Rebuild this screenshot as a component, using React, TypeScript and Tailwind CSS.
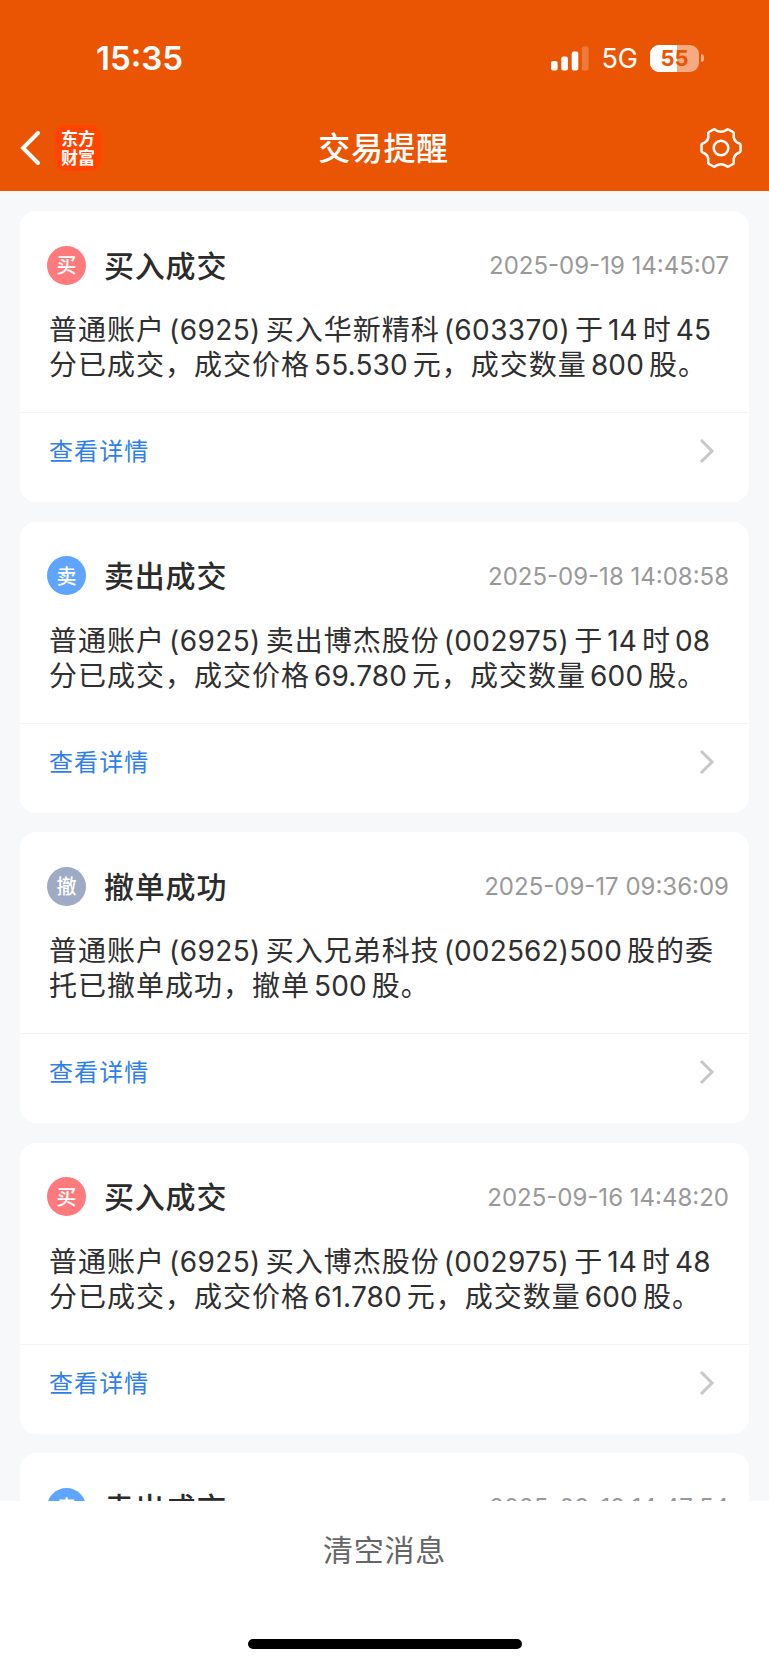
import { Fragment } from "react";

type Kind = "buy" | "sell" | "cancel";

interface Notice {
  kind: Kind;
  title: string;
  time: string;
  lines: string[];
}

const BADGE: Record<Kind, { label: string; className: string }> = {
  buy: { label: "买", className: "bg-[#ff7a7c]" },
  sell: { label: "卖", className: "bg-[#5fa5ff]" },
  cancel: { label: "撤", className: "bg-[#9fabc4]" },
};

const NOTICES: Notice[] = [
  {
    kind: "buy",
    title: "买入成交",
    time: "2025-09-19 14:45:07",
    lines: [
      "普通账户(6925)买入华新精科(603370)于14时45",
      "分已成交，成交价格55.530元，成交数量800股。",
    ],
  },
  {
    kind: "sell",
    title: "卖出成交",
    time: "2025-09-18 14:08:58",
    lines: [
      "普通账户(6925)卖出博杰股份(002975)于14时08",
      "分已成交，成交价格69.780元，成交数量600股。",
    ],
  },
  {
    kind: "cancel",
    title: "撤单成功",
    time: "2025-09-17 09:36:09",
    lines: [
      "普通账户(6925)买入兄弟科技(002562)500股的委",
      "托已撤单成功，撤单500股。",
    ],
  },
  {
    kind: "buy",
    title: "买入成交",
    time: "2025-09-16 14:48:20",
    lines: [
      "普通账户(6925)买入博杰股份(002975)于14时48",
      "分已成交，成交价格61.780元，成交数量600股。",
    ],
  },
  {
    kind: "sell",
    title: "卖出成交",
    time: "2025-09-12 14:47:54",
    lines: [],
  },
];

/** Sets digits and brackets in the Latin face with a little air on both sides. */
function MixedText({ text }: { text: string }) {
  const parts = text.split(/([0-9.()]+)/);
  return (
    <>
      {parts.map((part, i) =>
        i % 2 ? (
          <span
            key={i}
            className={`ml-1 font-['Inter'] leading-none ${
              part.endsWith(")") ? "mr-[5px] tracking-[0.4px]" : "mr-[5px] tracking-[0.15px]"
            }`}
          >
            {part}
          </span>
        ) : (
          <Fragment key={i}>{part}</Fragment>
        )
      )}
    </>
  );
}

function StatusBar() {
  return (
    <div className="flex h-[100px] items-end justify-between pr-[65px] pb-[24px] pl-[96px] font-['Inter'] text-white">
      <span className="text-[33px] leading-9 font-semibold">15:35</span>
      <div className="flex h-9 items-center">
        <svg width="38" height="25" viewBox="0 0 38 25" fill="#fff">
          <rect x="0" y="15" width="6.6" height="9.5" rx="2" />
          <rect x="10.3" y="10.5" width="6.6" height="14" rx="2" />
          <rect x="20.7" y="5.5" width="6.6" height="19" rx="2" />
          <rect x="31" y="0.5" width="6.6" height="24" rx="2" opacity="0.22" />
        </svg>
        <span className="mt-0.5 ml-3 text-[27px] leading-9">5G</span>
        <div className="relative ml-3 flex h-[27px] w-[49px] items-center justify-center overflow-hidden rounded-[9px] bg-white/50">
          <div className="absolute inset-y-0 left-0 w-[27px] bg-white" />
          <span className="relative text-[22px] leading-none font-bold text-[#ea5504]">55</span>
        </div>
        <div className="ml-0.5 h-2 w-[3px] rounded-r-full bg-white/50" />
      </div>
    </div>
  );
}

function NavBar() {
  return (
    <div className="grid h-[91px] grid-cols-[1fr_auto_1fr] items-center pt-[4px] pr-[26px] pl-[20px]">
      <div className="flex items-center">
        <svg width="22" height="36" viewBox="0 0 22 36" fill="none" stroke="#fff" strokeWidth="4">
          <path d="M18 3 3 18l15 15" strokeLinecap="round" />
        </svg>
        <div className="ml-[13px] flex size-[46px] flex-col items-center justify-center rounded-[10px] bg-[#ff4400] pb-0.5 font-['Noto_Sans_CJK_SC'] text-[17px] leading-[19px] font-bold text-white">
          <span>东方</span>
          <span>财富</span>
        </div>
      </div>
      <h1 className="-mt-[3px] pl-[4px] text-[32px] leading-10 font-medium tracking-[0.6px] text-white">
        交易提醒
      </h1>
      <svg
        className="justify-self-end"
        width="44"
        height="44"
        viewBox="-22 -22 44 44"
        fill="none"
        stroke="#fff"
        strokeWidth="2.5"
        strokeLinejoin="round"
      >
        <path d="M-7.500 -18.500 Q-6.500 -19 -5.500 -18 Q0 -14.500 5.500 -18 Q6.500 -19 7.500 -18.500 L12 -16 Q13 -15.500 12.700 -14 Q11.700 -6.800 18.300 -4.500 Q19.500 -4 19.500 -3 V3 Q19.500 4 18.300 4.500 Q11.700 6.800 12.700 14 Q13 15.500 12 16 L7.500 18.500 Q6.500 19 5.500 18 Q0 14.500 -5.500 18 Q-6.500 19 -7.500 18.500 L-12 16 Q-13 15.500 -12.700 14 Q-11.700 6.800 -18.300 4.500 Q-19.500 4 -19.500 3 V-3 Q-19.500 -4 -18.300 -4.500 Q-11.700 -6.800 -12.700 -14 Q-13 -15.500 -12 -16 Z" />
        <circle r="7.300" />
      </svg>
    </div>
  );
}

function NoticeCard({ notice }: { notice: Notice }) {
  const badge = BADGE[notice.kind];

  return (
    <article className="h-[291px] shrink-0 rounded-2xl bg-white">
      <div className="h-[202px] border-b border-[#f3f4f6] pt-[34px]">
        <header className="flex h-10 items-center pr-[20px] pl-[27px]">
          <span
            className={`flex size-[39px] items-center justify-center rounded-full text-[20px] leading-none font-medium text-white ${badge.className}`}
          >
            {badge.label}
          </span>
          <h2 className="-mt-[3px] ml-[18px] text-[30px] leading-10 font-medium tracking-[0.8px] text-[#2b2b2b]">
            {notice.title}
          </h2>
          <time className="mt-0.5 ml-auto font-['Inter'] text-[24px] text-[#999]">{notice.time}</time>
        </header>
        <p className="mt-[26px] pl-[29px] text-[28px] leading-[35px] tracking-[1px] whitespace-nowrap text-[#2f2f2f]">
          {notice.lines.map((line) => (
            <span key={line} className="block">
              <MixedText text={line} />
            </span>
          ))}
        </p>
      </div>
      <div className="flex h-[76px] items-center justify-between pr-[34px] pl-[29px]">
        <a className="-mt-0.5 text-[24px] tracking-[1.1px] text-[#2e7fe8]">查看详情</a>
        <svg width="16" height="26" viewBox="0 0 16 26" fill="none" stroke="#c8c8c8" strokeWidth="3">
          <path d="M2 2 13 13 2 24" />
        </svg>
      </div>
    </article>
  );
}

export default function App() {
  return (
    <div className="flex h-[1665px] w-[769px] flex-col overflow-hidden bg-[#f6f8fa] font-['Noto_Sans_CJK_SC',sans-serif]">
      <div className="shrink-0 bg-[#ea5504]">
        <StatusBar />
        <NavBar />
      </div>
      <main className="flex min-h-0 flex-1 flex-col gap-[19.6px] overflow-hidden px-[20px] pt-[20px]">
        {NOTICES.map((notice) => (
          <NoticeCard key={notice.time} notice={notice} />
        ))}
      </main>
      <footer className="flex h-[164px] shrink-0 flex-col items-center justify-between bg-white pt-[27px] pb-[16px]">
        <button className="text-[30px] leading-10 tracking-[0.8px] text-[#666]">清空消息</button>
        <div className="h-[10px] w-[274px] rounded-full bg-black" />
      </footer>
    </div>
  );
}
